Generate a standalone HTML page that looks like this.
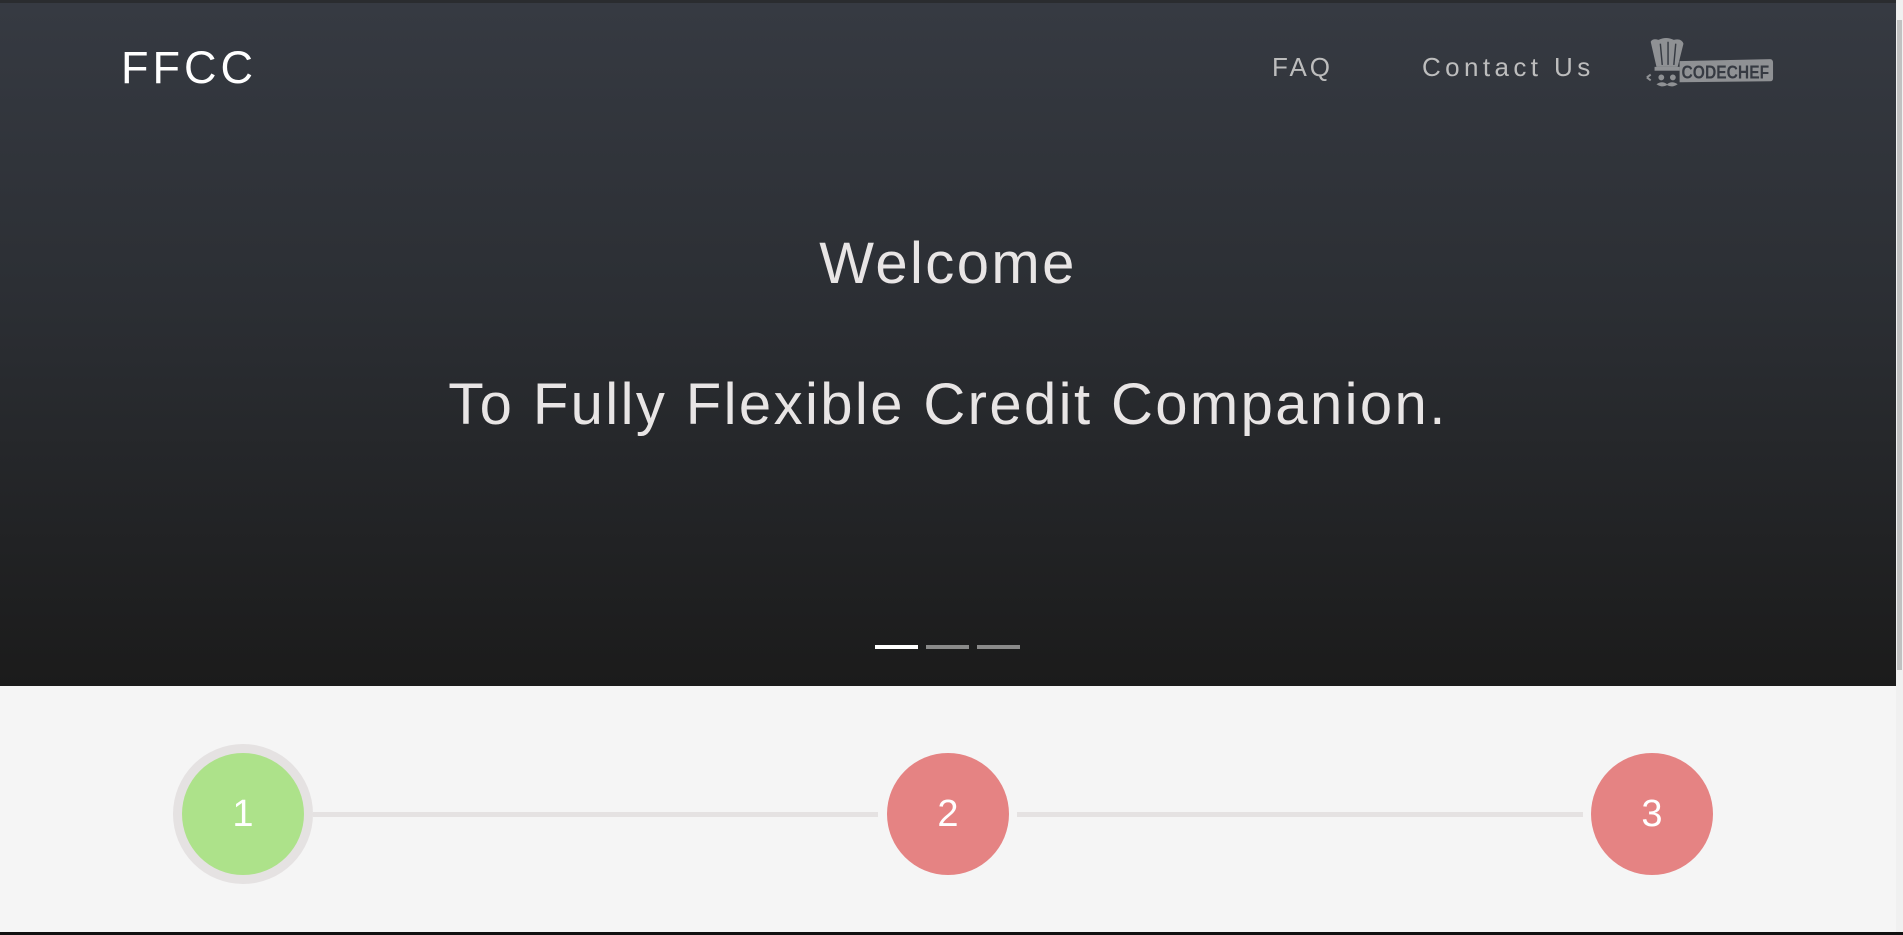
<!DOCTYPE html>
<html><head><meta charset="utf-8"><style>
html,body{margin:0;padding:0;width:1903px;height:935px;overflow:hidden;background:#f5f5f5;font-family:"Liberation Sans",sans-serif;}
.top{position:absolute;left:0;top:0;width:1903px;height:3px;background:#2a2c2f;}
.hero{position:absolute;left:0;top:3px;width:1896px;height:683px;background:linear-gradient(#363a42 0%,#2b2e33 45%,#1b1b1b 100%);}
.sb{position:absolute;left:1896px;top:0;width:7px;height:935px;background:#f0f0f0;}
.sb div{position:absolute;left:1px;top:20px;width:5px;height:650px;background:#c1c1c1;}
.logo{position:absolute;left:121px;top:42px;font-size:45px;color:#fff;letter-spacing:4px;}
.nav{position:absolute;top:52px;font-size:26px;color:#bdbdbd;letter-spacing:3px;}
.h{position:absolute;left:0;width:1896px;text-align:center;color:#e8e5e5;font-size:58px;letter-spacing:2.4px;}
.ind{position:absolute;top:645px;height:4px;width:43px;background:#8a8a8a;}
.line{position:absolute;top:812px;height:5px;background:#e5e2e2;}
.c{position:absolute;width:122px;height:122px;border-radius:50%;color:#fff;font-size:38px;text-align:center;line-height:122px;}
.bot{position:absolute;left:0;top:932px;width:1903px;height:3px;background:#111;}
</style></head><body>
<div class="top"></div>
<div class="hero"></div>
<div class="sb"><div></div></div>
<div class="logo">FFCC</div>
<div class="nav" style="left:1272px">FAQ</div>
<div class="nav" style="left:1422px;letter-spacing:4.4px">Contact Us</div>
<svg style="position:absolute;left:1643px;top:36px" width="131" height="54" viewBox="0 0 136 56">
  <path d="M8 6 Q10 2 16 4 Q24 0 32 4 Q40 2 42 8 L36 32 L14 32 Z" fill="#8f9194"/>
  <path d="M18 8 L20 30 M26 6 L26 30 M34 8 L32 30" stroke="#363a42" stroke-width="1.5" fill="none"/>
  <rect x="12" y="32" width="26" height="4" fill="#8f9194"/>
  <path d="M4 43 L8 40 M4 43 L8 46 M46 43 L42 40 M46 43 L42 46" stroke="#8f9194" stroke-width="2"/>
  <circle cx="19" cy="43" r="3" fill="#8f9194"/><circle cx="31" cy="43" r="3" fill="#8f9194"/>
  <path d="M14 50 Q20 46 25 50 Q30 46 36 50 Q30 54 25 51 Q20 54 14 50Z" fill="#8f9194"/>
  <path d="M38 26 L132 24 Q135 24 135 28 L135 44 Q135 47 132 47 L38 48 Z" fill="#8f9194"/>
  <text x="40" y="44" font-family="Liberation Sans" font-weight="bold" font-size="19" fill="#363a42" textLength="91" lengthAdjust="spacingAndGlyphs">CODECHEF</text>
</svg>
<div class="h" style="top:230px">Welcome</div>
<div class="h" style="top:371px">To Fully Flexible Credit Companion.</div>
<div class="ind" style="left:875px;background:#fff"></div>
<div class="ind" style="left:926px"></div>
<div class="ind" style="left:977px"></div>
<div class="line" style="left:313px;width:565px"></div>
<div class="line" style="left:1017px;width:566px"></div>
<div style="position:absolute;left:173px;top:744px;width:140px;height:140px;border-radius:50%;background:#e5e2e2;"></div>
<div class="c" style="left:182px;top:753px;background:#ade28a">1</div>
<div class="c" style="left:887px;top:753px;background:#e58383">2</div>
<div class="c" style="left:1591px;top:753px;background:#e58383">3</div>
<div class="bot"></div>
</body></html>
